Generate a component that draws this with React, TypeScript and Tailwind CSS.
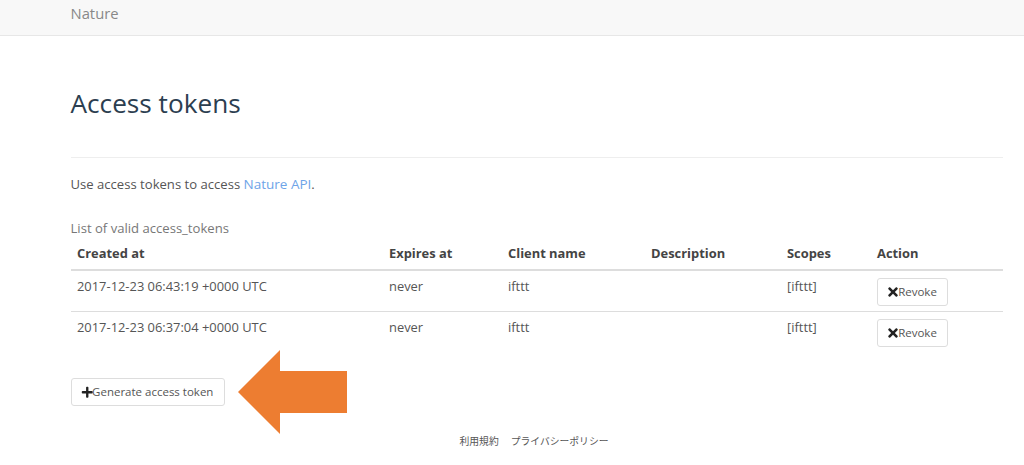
import { FaPlus, FaTimes } from "react-icons/fa";

const tokens = [
  { created: "2017-12-23 06:43:19 +0000 UTC", expires: "never", client: "ifttt", scopes: "[ifttt]" },
  { created: "2017-12-23 06:37:04 +0000 UTC", expires: "never", client: "ifttt", scopes: "[ifttt]" },
];

export default function App() {
  return (
    <div className="relative h-[465px] w-[1024px] overflow-hidden bg-white font-['Open_Sans',sans-serif] text-[12.9px] text-[#555]">
      <nav className="flex h-[36px] items-center border-b border-[#e7e7e7] bg-[#f8f8f8] pb-[8px] pl-[70.5px] text-[14.8px] text-[#888]">
        Nature
      </nav>

      <main className="ml-[70.5px] mr-[21px]">
        <h1 className="mt-[48px] text-[26.2px] leading-[38px] text-[#2c3e50]">Access tokens</h1>
        <hr className="mt-[35px] border-t border-[#eee]" />
        <p className="mt-[16px] text-[13.1px] leading-[20px]">
          Use access tokens to access <a className="text-[13.5px] text-[#6ea4e8]">Nature API</a>.
        </p>

        <div className="mt-[24px] text-[13.1px] leading-[20px] text-[#777]">List of valid access_tokens</div>
        <table className="w-[932.5px] table-fixed border-collapse">
          <thead>
            <tr className="border-b-2 border-[#ddd] text-left font-bold text-[#444]">
              <th className="h-[32px] w-[312px] pl-[6.5px]">Created at</th>
              <th className="w-[119px] pl-[6.5px]">Expires at</th>
              <th className="w-[143px] pl-[6.5px]">Client name</th>
              <th className="w-[136px] pl-[6.5px]">Description</th>
              <th className="w-[90px] pl-[6.5px]">Scopes</th>
              <th className="pl-[6.5px]">Action</th>
            </tr>
          </thead>
          <tbody>
            {tokens.map((token, i) => (
              <tr key={token.created} className={i === 0 ? "border-b border-[#ddd] align-top" : "align-top"}>
                <td className="pl-[6.5px] pt-[6px]">{token.created}</td>
                <td className="pl-[6.5px] pt-[6px]">{token.expires}</td>
                <td className="pl-[6.5px] pt-[6px]">{token.client}</td>
                <td className="pl-[6.5px] pt-[6px]" />
                <td className="pl-[6.5px] pt-[6px]">{token.scopes}</td>
                <td className="h-[41.5px] pl-[6.5px] pt-[7px]">
                  <button className="flex h-[28px] w-[71px] items-center justify-center rounded-[3px] border border-[#ddd] bg-white text-[11.5px] text-[#555]">
                    <FaTimes className="-mx-[2px] shrink-0 text-[14px] text-[#222]" />
                    Revoke
                  </button>
                </td>
              </tr>
            ))}
          </tbody>
        </table>

        <button className="mt-[25px] flex h-[28px] w-[154px] items-center justify-center rounded-[3px] border border-[#ddd] bg-white text-[11.5px] text-[#555]">
          <FaPlus className="-mx-[1px] shrink-0 text-[12.5px] text-[#222]" />
          Generate access token
        </button>
      </main>

      <footer className="mt-[28px] flex justify-center gap-[12px] pl-[44px] font-['Noto_Sans_CJK_JP',sans-serif] text-[9.8px] text-[#555]">
        <span>利用規約</span>
        <span>プライバシーポリシー</span>
      </footer>

      <svg className="absolute left-[238px] top-[350px]" width="110" height="85" viewBox="0 0 110 85">
        <path d="M0 42 L42 0 L42 21 L109 21 L109 63 L42 63 L42 84 Z" fill="#ed7d31" />
      </svg>
    </div>
  );
}
